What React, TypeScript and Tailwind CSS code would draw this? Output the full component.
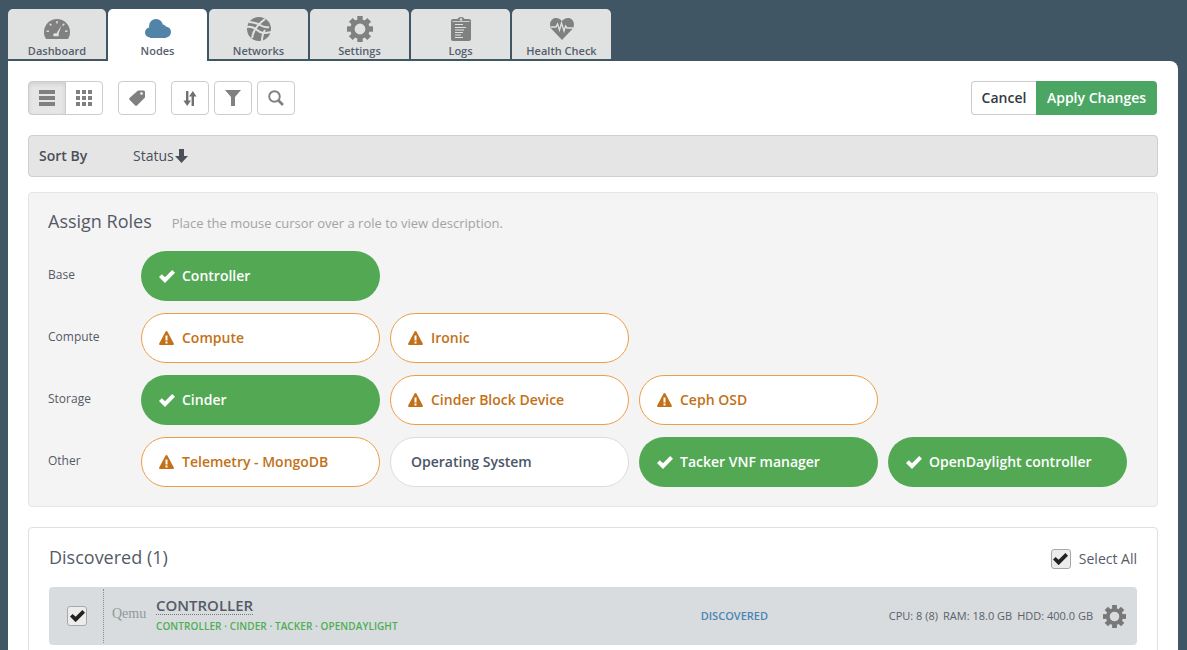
const GaugeIcon = () => (
  <svg width="26" height="20" viewBox="0 0 26 20">
    <path d="M13 0C5.800 0 0 5.800 0 13c0 2.400.6 4.600 1.700 6.500.2.300.5.500.9.500h20.800c.4 0 .7-.2.900-.5 1.100-1.900 1.700-4.100 1.700-6.500C26 5.800 20.200 0 13 0z" fill="#808080" />
    <g fill="#e0e2e2">
      <rect x="12.300" y="2" width="1.400" height="2.500" />
      <rect x="5.800" y="4.500" width="1.400" height="2.500" transform="rotate(-45 6.500 5.700)" />
      <rect x="18.800" y="4.500" width="1.400" height="2.500" transform="rotate(45 19.500 5.700)" />
      <rect x="2.500" y="11.500" width="2.500" height="1.400" />
      <rect x="21" y="11.500" width="2.500" height="1.400" />
      <path d="M17.500 6.500l-3 8.500c.6.800.5 1.800-.2 2.300H9.800c-.8-.7-.7-2.200.3-2.800.7-.4 1.600-.4 2.300.1z" />
    </g>
  </svg>
);

const CloudIcon = () => (
  <svg width="26" height="19" viewBox="0 0 26 19" fill="#5284a8">
    <circle cx="11" cy="7" r="7" />
    <circle cx="5" cy="13.500" r="5" />
    <circle cx="20.500" cy="13" r="5.500" />
    <circle cx="17.500" cy="9" r="3.500" />
    <rect x="5" y="10" width="16" height="9" />
  </svg>
);

const GlobeIcon = () => (
  <svg width="24" height="24" viewBox="0 0 24 24">
    <circle cx="12" cy="12" r="12" fill="#808080" />
    <g fill="none" stroke="#e0e2e2" strokeWidth="2">
      <path d="M0 10c4-1 7 .5 10 3s6 4 14 2" />
      <path d="M5 21c1-7 5-13 13-19" />
      <path d="M2 5c4 .5 8 1 11 3s5 3 9 2" />
      <path d="M15 24c0-4 1-8 3-11" />
    </g>
  </svg>
);

const ClipboardIcon = () => (
  <svg width="20" height="24" viewBox="0 0 20 24">
    <path d="M2 2h4.500C7 .8 8.400 0 10 0s3 .8 3.500 2H18c1.100 0 2 .9 2 2v18c0 1.100-.9 2-2 2H2c-1.100 0-2-.9-2-2V4c0-1.100.9-2 2-2z" fill="#808080" />
    <circle cx="10" cy="2.500" r="1.200" fill="#e0e2e2" />
    <rect x="1.500" y="4" width="17" height="0.800" fill="#e0e2e2" />
    <g fill="#e0e2e2">
      <rect x="4" y="7" width="8" height="1" />
      <rect x="4" y="10" width="11" height="1" />
      <rect x="4" y="12.500" width="9" height="1" />
      <rect x="4" y="15" width="8" height="1" />
      <rect x="4" y="17.500" width="6" height="1" />
      <rect x="4" y="20" width="8" height="1" />
    </g>
  </svg>
);

const HeartIcon = () => (
  <svg width="24" height="22" viewBox="0 0 24 22">
    <path d="M12 22L2 11.500C-.7 8.600-.6 4 2.200 1.500 5-.9 9.200-.3 12 3c2.800-3.300 7-3.900 9.800-1.500 2.800 2.500 2.900 7.100.2 10z" fill="#808080" />
    <path d="M1 9h5l1.500-3 2 6 2-7 2.500 8 1.500-5 1.500 2H23" fill="none" stroke="#e0e2e2" strokeWidth="1.300" />
  </svg>
);

const GearIcon = ({ size, color }: { size: number; color: string }) => (
  <svg width={size} height={size} viewBox="0 0 24 24" fill={color}>
    <circle cx="12" cy="12" r="7" fill="none" stroke={color} strokeWidth="4" />
    {[0, 45, 90, 135, 180, 225, 270, 315].map((a) => (
      <rect key={a} x="9.500" y="0" width="5" height="4" transform={`rotate(${a} 12 12)`} />
    ))}
  </svg>
);

const ListIcon = () => (
  <svg width="16" height="16" viewBox="0 0 16 16" fill="#808080">
    <rect width="16" height="4" />
    <rect y="6" width="16" height="4" />
    <rect y="12" width="16" height="4" />
  </svg>
);

const GridIcon = () => (
  <svg width="16" height="16" viewBox="0 0 16 16" fill="#808080">
    <rect width="4" height="4" />
    <rect x="6" width="4" height="4" />
    <rect x="12" width="4" height="4" />
    <rect y="6" width="4" height="4" />
    <rect x="6" y="6" width="4" height="4" />
    <rect x="12" y="6" width="4" height="4" />
    <rect y="12" width="4" height="4" />
    <rect x="6" y="12" width="4" height="4" />
    <rect x="12" y="12" width="4" height="4" />
  </svg>
);

const SortIcon = () => (
  <svg width="14" height="15" viewBox="0 0 14 15" fill="#707070">
    <path d="M3 0h2.400v9.500H8L4.200 15 .4 9.500H3z" />
    <path d="M8.600 15V5.500H6L9.800 0l3.800 5.500H11V15z" />
  </svg>
);

const TagIcon = () => (
  <svg width="16" height="16" viewBox="0 0 16 16" fill="#808080">
    <path fillRule="evenodd" d="M9 .5h5.500c.8 0 1.500.7 1.500 1.500v5.500L8 15.500c-.6.500-1.300.500-1.800 0L.5 9.800c-.5-.5-.5-1.200 0-1.800zM12.500 2.200a1.300 1.300 0 100 2.600 1.300 1.300 0 000-2.600z" />
  </svg>
);

const FilterIcon = () => (
  <svg width="16" height="16" viewBox="0 0 16 16" fill="#808080">
    <path d="M0 0h16L10 7v9H6V7z" />
  </svg>
);

const SearchIcon = () => (
  <svg width="16" height="16" viewBox="0 0 16 16" fill="none" stroke="#808080">
    <circle cx="6.500" cy="6.500" r="5.300" strokeWidth="1.900" />
    <path d="M10.500 10.500L15 15" strokeWidth="2.600" />
  </svg>
);

const CheckIcon = ({ color, width }: { color: string; width: number }) => (
  <svg width={width} viewBox="0 0 16 13" fill={color}>
    <path d="M0 7l2.800-2.800L6 7.300 13.200 0 16 2.800 6 13z" />
  </svg>
);

const WarnIcon = () => (
  <svg width="15" height="14" viewBox="0 0 15 14">
    <path d="M7.500 0c.4 0 .7.200.9.600l6.400 12c.3.600-.1 1.400-.9 1.400H1.100c-.8 0-1.200-.8-.9-1.400l6.400-12c.2-.4.500-.6.900-.6z" fill="#c27119" />
    <rect x="6.500" y="4.500" width="2" height="5" fill="#ffffff" />
    <rect x="6.500" y="10.500" width="2" height="2" fill="#ffffff" />
  </svg>
);

const ArrowDown = () => (
  <svg width="13" height="14" viewBox="0 0 13 14" fill="#4a4f5c">
    <path d="M4 0h5v7h4l-6.500 7L0 7h4z" />
  </svg>
);

const tabs = [
  { label: "Dashboard", icon: <GaugeIcon /> },
  { label: "Nodes", icon: <CloudIcon /> },
  { label: "Networks", icon: <GlobeIcon /> },
  { label: "Settings", icon: <GearIcon size={26} color="#808080" /> },
  { label: "Logs", icon: <ClipboardIcon /> },
  { label: "Health Check", icon: <HeartIcon /> },
];

const roleRows = [
  { name: "Base", roles: [{ label: "Controller", state: "on" }] },
  {
    name: "Compute",
    roles: [
      { label: "Compute", state: "warn" },
      { label: "Ironic", state: "warn" },
    ],
  },
  {
    name: "Storage",
    roles: [
      { label: "Cinder", state: "on" },
      { label: "Cinder Block Device", state: "warn" },
      { label: "Ceph OSD", state: "warn" },
    ],
  },
  {
    name: "Other",
    roles: [
      { label: "Telemetry - MongoDB", state: "warn" },
      { label: "Operating System", state: "off" },
      { label: "Tacker VNF manager", state: "on" },
      { label: "OpenDaylight controller", state: "on" },
    ],
  },
];

const Role = ({ label, state }: { label: string; state: string }) => {
  if (state === "on") {
    return (
      <div className="flex items-center w-[239px] h-[50px] pl-[18px] rounded-[25px] bg-[#53a854] text-white text-sm font-semibold">
        <span className="mr-[7px]">
          <CheckIcon color="#ffffff" width={16} />
        </span>
        {label}
      </div>
    );
  }
  if (state === "warn") {
    return (
      <div className="flex items-center w-[239px] h-[50px] pl-[17px] rounded-[25px] bg-white border border-[#ee9d47] text-[#c27119] text-sm font-semibold">
        <span className="mr-[8px]">
          <WarnIcon />
        </span>
        {label}
      </div>
    );
  }
  return (
    <div className="flex items-center w-[239px] h-[50px] pl-[20px] rounded-[25px] bg-white border border-[#dcdcdc] text-[#4a5568] text-sm font-semibold">
      {label}
    </div>
  );
};

const toolBtn = "flex items-center justify-center w-[38px] h-[34px] bg-white border border-[#cccccc] rounded-[4px]";
const checkBox = "flex items-center justify-center w-[20px] h-[20px] bg-[#ececec] border border-[#a8a8a8] rounded-[3px]";

const App = () => {
  return (
    <main className="h-screen overflow-hidden bg-[#415665] pl-[8px] pr-[9px] pt-[9px] text-[#4a4f5c] font-['Open_Sans',sans-serif]">
      <nav className="flex gap-[2px] h-[52px] pb-[2px]">
        {tabs.map((t) => (
          <div
            key={t.label}
            className={
              t.label === "Nodes"
                ? "flex flex-col items-center w-[99px] h-[52px] -mb-[2px] bg-white rounded-t-[5px] relative"
                : t.label === "Dashboard"
                  ? "flex flex-col items-center w-[98px] h-[50px] bg-[#e0e2e2] rounded-t-[5px]"
                  : "flex flex-col items-center w-[99px] h-[50px] bg-[#e0e2e2] rounded-t-[5px]"
            }
          >
            <div className="flex items-center justify-center h-[34px] w-full pt-[5px]">{t.icon}</div>
            <span className="text-[11px] leading-[15px] font-semibold text-[#565e6e]">{t.label}</span>
          </div>
        ))}
      </nav>

      <div className="bg-white rounded-tr-[8px] h-[600px] px-[20px] pt-[20px] w-[1170px]">
        <div className="flex items-center h-[34px]">
          <div className="flex">
            <div className="flex items-center justify-center w-[38px] h-[34px] bg-[#e6e6e6] border border-[#cccccc] rounded-l-[4px] shadow-[inset_0_2px_4px_rgba(0,0,0,0.1)]">
              <ListIcon />
            </div>
            <div className="flex items-center justify-center w-[38px] h-[34px] -ml-px bg-white border border-[#cccccc] rounded-r-[4px]">
              <GridIcon />
            </div>
          </div>
          <div className={`${toolBtn} ml-[15px]`}>
            <TagIcon />
          </div>
          <div className={`${toolBtn} ml-[15px]`}>
            <SortIcon />
          </div>
          <div className={`${toolBtn} ml-[5px]`}>
            <FilterIcon />
          </div>
          <div className={`${toolBtn} ml-[5px]`}>
            <SearchIcon />
          </div>
          <div className="flex ml-auto mr-[1px] h-[34px] text-sm">
            <div className="flex items-center justify-center w-[65px] bg-white border border-r-0 border-[#cccccc] rounded-l-[4px] font-semibold text-[#333a45]">
              Cancel
            </div>
            <div className="flex items-center justify-center w-[121px] bg-[#4ba664] rounded-r-[4px] font-semibold text-white">
              Apply Changes
            </div>
          </div>
        </div>

        <div className="flex items-center mt-[20px] h-[42px] bg-[#e5e5e5] border border-[#cfcfcf] rounded-[4px] pl-[10px] text-sm w-[1130px]">
          <span className="w-[94px] font-semibold">Sort By</span>
          <span className="flex items-center">
            Status
            <span className="ml-[1px]">
              <ArrowDown />
            </span>
          </span>
        </div>

        <section className="mt-[15px] h-[315px] w-[1130px] bg-[#f4f4f4] border border-[#e5e5e5] rounded-[4px] pl-[19px] pt-[15px]">
          <div className="flex items-baseline">
            <h2 className="text-lg leading-[26px] text-[#555a66]">Assign Roles</h2>
            <span className="ml-[20px] text-[13px] text-[#a3a3a3]">
              Place the mouse cursor over a role to view description.
            </span>
          </div>
          <div className="flex flex-col gap-[12px] mt-[17px]">
            {roleRows.map((row) => (
              <div key={row.name} className="flex">
                <div className="w-[93px] pt-[15px] text-xs leading-[18px] text-[#555a66]">{row.name}</div>
                <div className="flex gap-[10px]">
                  {row.roles.map((r) => (
                    <Role key={r.label} label={r.label} state={r.state} />
                  ))}
                </div>
              </div>
            ))}
          </div>
        </section>

        <section className="mt-[20px] h-[140px] w-[1130px] bg-white border border-[#e0e0e0] rounded-[4px] px-[20px] pt-[15px]">
          <div className="flex items-center h-[28px]">
            <h2 className="text-lg text-[#555a66]">Discovered (1)</h2>
            <div className="flex items-center ml-auto pt-[4px] text-sm text-[#555a66]">
              <div className={`${checkBox} mr-[8px]`}>
                <CheckIcon color="#222222" width={15} />
              </div>
              <span>Select All</span>
            </div>
          </div>
          <div className="flex items-center mt-[16px] h-[58px] bg-[#d8dcdf] rounded-[4px]">
            <div className="flex items-center justify-center w-[55px] h-[54px] pl-[2px] border-r border-dotted border-[#8a8f94]">
              <div className={checkBox}>
                <CheckIcon color="#222222" width={15} />
              </div>
            </div>
            <span className="ml-[8px] w-[44px] pb-[4px] text-sm text-[#93979b] font-['Liberation_Serif',serif]">Qemu</span>
            <div className="pb-[4px]">
              <div className="w-fit text-[15px] leading-[18px] font-semibold text-[#555a66] border-b border-dotted border-[#777777]">
                CONTROLLER
              </div>
              <div className="mt-[4px] text-[10px] leading-[14px] font-semibold tracking-[0.08px] text-[#4fae55]">
                CONTROLLER · CINDER · TACKER · OPENDAYLIGHT
              </div>
            </div>
            <span className="ml-[303px] text-[11px] font-semibold text-[#4a86b4]">DISCOVERED</span>
            <div className="flex gap-[5px] ml-auto text-[11px] text-[#5a6068]">
              <span>CPU: 8 (8)</span>
              <span>RAM: 18.0 GB</span>
              <span>HDD: 400.0 GB</span>
            </div>
            <span className="ml-[10px] mr-[11px]">
              <GearIcon size={23} color="#787878" />
            </span>
          </div>
        </section>
      </div>
    </main>
  );
};

export default App;
